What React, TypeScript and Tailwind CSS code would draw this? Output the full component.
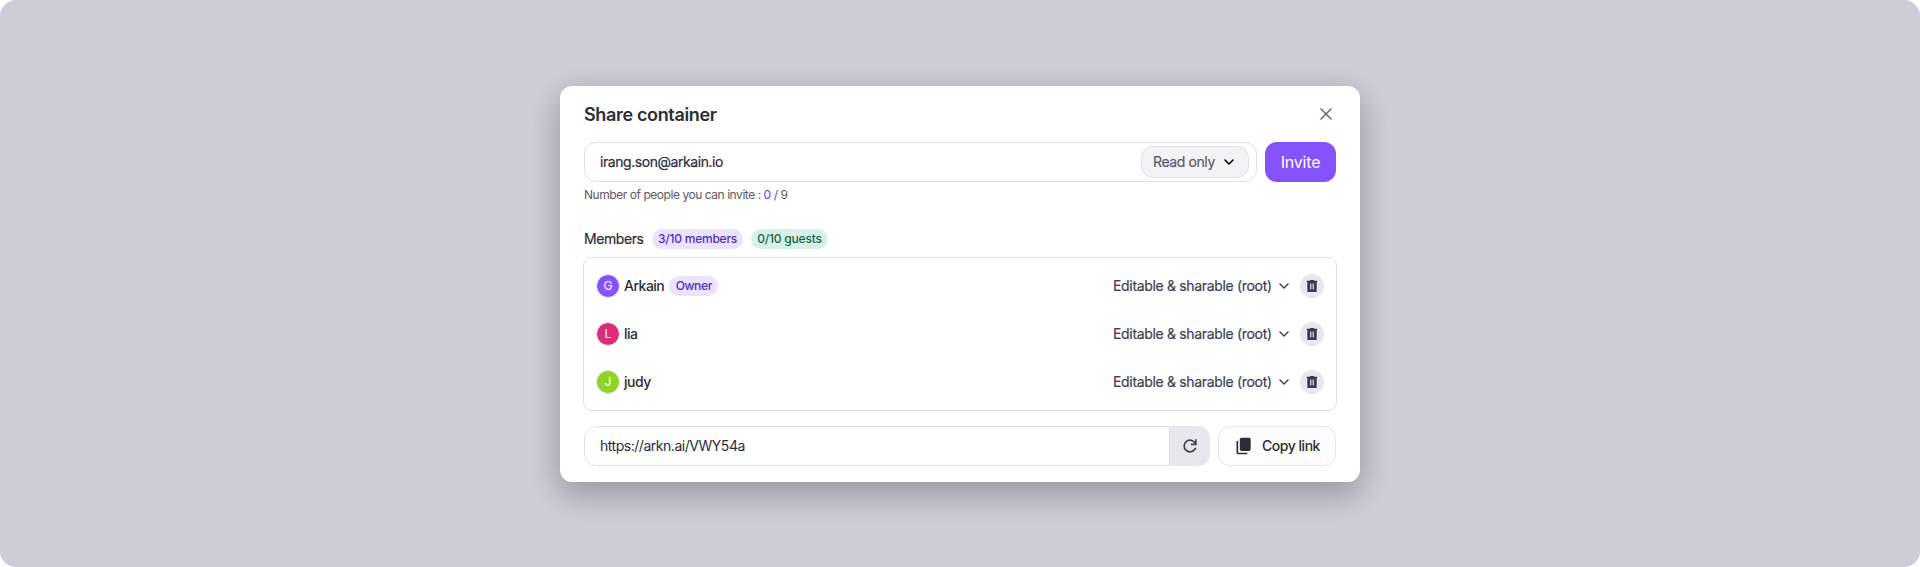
import React from 'react';

type Member = { name: string; initial: string; color: string; owner?: boolean };

const members: Member[] = [
  { name: 'Arkain', initial: 'G', color: 'bg-[#8652fb]', owner: true },
  { name: 'lia', initial: 'L', color: 'bg-[#dd2d77]' },
  { name: 'judy', initial: 'J', color: 'bg-[#8fd524]' },
];

function Chevron({ className }: { className: string }) {
  return (
    <svg viewBox="0 0 10 6" fill="none" stroke="currentColor" className={className}>
      <path d="M1 1l4 4 4-4" strokeLinecap="round" strokeLinejoin="round" />
    </svg>
  );
}

function CloseIcon() {
  return (
    <svg width="12" height="12" viewBox="0 0 12 12" fill="none" stroke="currentColor" strokeWidth="1.6">
      <path d="M1 1l10 10M11 1L1 11" strokeLinecap="round" />
    </svg>
  );
}

function TrashIcon() {
  return (
    <svg width="16" height="16" viewBox="0 0 16 16" fill="currentColor">
      <path
        fillRule="evenodd"
        d="M6 2h4v.7h3.3V4h-.6v9.2a.9.9 0 0 1-.9.9H4.2a.9.9 0 0 1-.9-.9V4h-.6V2.7H6zM6.2 5.4v5.8h1.2V5.4zm2.4 0v5.8h1.2V5.4z"
      />
    </svg>
  );
}

function RefreshIcon() {
  return (
    <svg width="20" height="20" viewBox="0 0 24 24" fill="currentColor">
      <path d="M12 20q-3.35 0-5.675-2.325T4 12t2.325-5.675T12 4q1.725 0 3.3.712T18 6.75V4h2v7h-7V9h4.2q-.8-1.4-2.187-2.2T12 6Q9.5 6 7.75 7.75T6 12t1.75 4.25T12 18q1.925 0 3.475-1.1T17.65 14h2.1q-.7 2.65-2.85 4.325T12 20" />
    </svg>
  );
}

function CopyIcon() {
  return (
    <svg width="20" height="20" viewBox="0 0 24 24" fill="currentColor">
      <path d="M9 18q-.825 0-1.412-.587T7 16V4q0-.825.588-1.412T9 2h9q.825 0 1.413.588T20 4v12q0 .825-.587 1.413T18 18zm-4 4q-.825 0-1.412-.587T3 20V6h2v14h11v2z" />
    </svg>
  );
}

function MemberRow({ member }: { member: Member }) {
  return (
    <li className="flex h-12 items-center justify-between pr-3 pl-3">
      <div className="flex items-center">
        <span
          className={`flex size-6 items-center justify-center rounded-full border border-[#d9d9e2] bg-clip-padding text-[12px] leading-none text-white ${member.color}`}
        >
          {member.initial}
        </span>
        <span className="ml-1 pb-px text-[14px] font-medium tracking-[-0.5px] text-[#2c2d36]">{member.name}</span>
        {member.owner && (
          <span className="ml-[5px] flex h-5 w-[49px] items-center justify-center rounded-full bg-[#ebe3fe] text-[12px] font-medium tracking-[-0.35px] text-[#4f2bbd]">
            Owner
          </span>
        )}
      </div>
      <div className="flex items-center">
        <span className="w-[158px] pb-px text-[14px] tracking-[-0.33px] whitespace-nowrap text-[#3f404d] [-webkit-text-stroke:0.2px]">
          Editable &amp; sharable (root)
        </span>
        <Chevron className="ml-[8px] h-[6px] w-[10px] text-[#3f404d] [stroke-width:1.4]" />
        <button className="ml-[11px] flex size-6 items-center justify-center rounded-full bg-[#e8e7ee] text-[#3a3b48]">
          <TrashIcon />
        </button>
      </div>
    </li>
  );
}

export default function App() {
  return (
    <div className="h-[567px] w-full bg-white font-[Inter,sans-serif]">
      <main className="flex h-full items-start justify-center rounded-2xl bg-[#cdcdd7] pt-[86px]">
        <section className="flex h-[396px] w-[800px] flex-col rounded-xl bg-white px-6 shadow-[0_14px_32px_rgba(10,14,6,0.22),0_4px_32px_rgba(20,20,40,0.09)]">
          <header className="flex h-14 items-center justify-between pr-1">
            <h1 className="text-[18px] font-semibold tracking-[-0.35px] text-[#2c2d36]">Share container</h1>
            <button className="text-[#6b6b80]">
              <CloseIcon />
            </button>
          </header>

          <div className="flex h-10 gap-2">
            <div className="flex w-[673px] items-center justify-between rounded-xl border border-[#e0e0e8] pr-[7px] pl-[15px]">
              <span className="pb-px text-[14px] tracking-[-0.44px] text-[#2c2d36] [-webkit-text-stroke:0.2px]">
                irang.son@arkain.io
              </span>
              <button className="flex h-8 w-[108px] items-center rounded-xl border border-[#e0e0e8] bg-[#f3f3f6] pl-[11px] text-[14px] tracking-[-0.4px] text-[#5a5a6b] [-webkit-text-stroke:0.2px]">
                <span className="w-[62px] pb-px text-left whitespace-nowrap">Read only</span>
                <Chevron className="ml-[9px] h-[6px] w-[10px] text-black [stroke-width:1.6]" />
              </button>
            </div>
            <button className="h-10 w-[71px] rounded-xl bg-[#8652fb] text-[16px] tracking-[-0.2px] text-white">
              Invite
            </button>
          </div>

          <p className="mt-[5px] h-4 text-[12px] leading-4 tracking-[-0.45px] text-[#5a5a6b]">
            Number of people you can invite : <span className="text-[#6a35f2]">0</span> / 9
          </p>

          <div className="mt-[26px] flex h-5 items-center">
            <h2 className="w-[68px] pb-px text-[14px] tracking-[-0.42px] text-[#2c2d36] [-webkit-text-stroke:0.2px]">
              Members
            </h2>
            <span className="flex h-5 w-[91px] items-center justify-center rounded-full bg-[#ebe3fe] text-[12px] font-medium tracking-[-0.22px] whitespace-nowrap text-[#4f2bbd]">
              3/10 members
            </span>
            <span className="ml-2 flex h-5 w-[77px] items-center justify-center rounded-full bg-[#d7f0e8] text-[12px] font-medium tracking-[-0.22px] whitespace-nowrap text-[#17664b]">
              0/10 guests
            </span>
          </div>

          <ul className="-mx-px mt-2 h-[154px] shrink-0 rounded-[9px] border border-[#e0e0e8] py-1">
            {members.map((member) => (
              <MemberRow key={member.name} member={member} />
            ))}
          </ul>

          <footer className="mt-[15px] flex h-10 gap-2">
            <div className="flex w-[626px] overflow-hidden rounded-xl">
              <span className="flex flex-1 items-center rounded-l-xl border border-[#e0e0e8] pb-px pl-[15px] text-[14px] tracking-[-0.47px] text-[#2c2d36]">
                https://arkn.ai/VWY54a
              </span>
              <button className="flex w-10 items-center justify-center bg-[#e8e7ee] text-[#3f404d]">
                <RefreshIcon />
              </button>
            </div>
            <button className="flex w-[118px] items-center rounded-xl border border-[#e8e7ee] bg-[#fdfdfd] pl-[15px] text-[14px] font-medium text-[#2c2d36]">
              <CopyIcon />
              <span className="ml-2 pb-px tracking-[-0.47px]">Copy link</span>
            </button>
          </footer>
        </section>
      </main>
    </div>
  );
}
